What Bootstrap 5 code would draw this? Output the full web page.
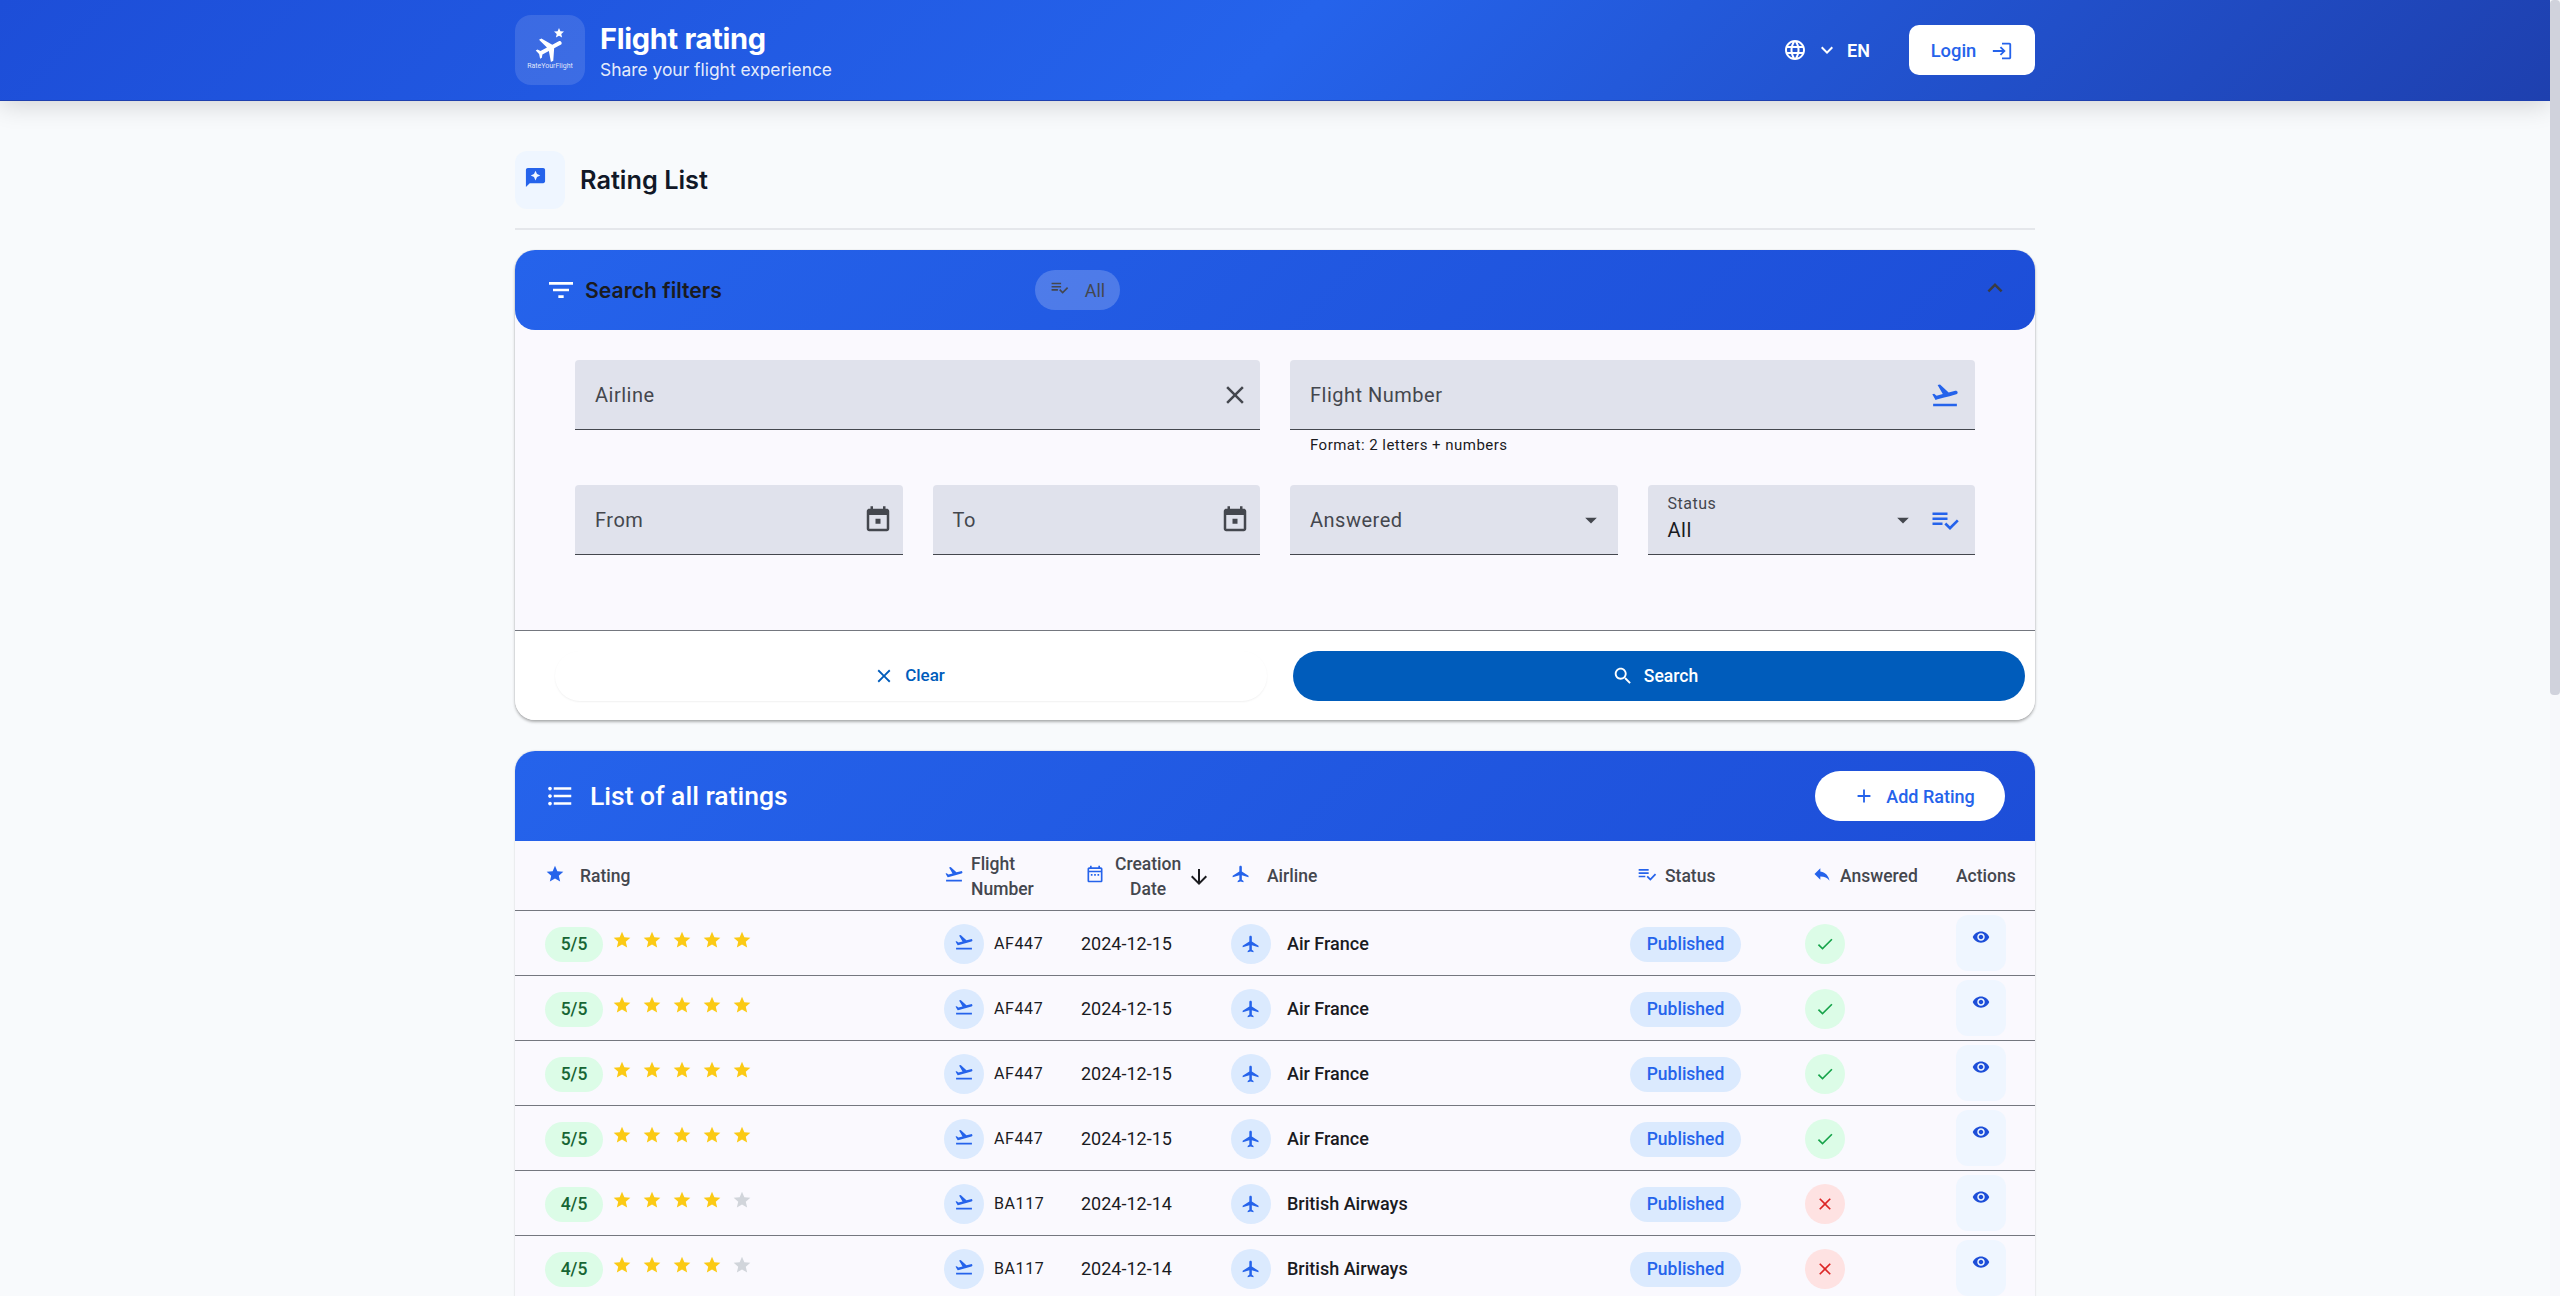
<!DOCTYPE html>
<html lang="en">
<head>
<meta charset="utf-8">
<title>Flight rating</title>
<link href="https://cdn.jsdelivr.net/npm/bootstrap@5.3.0/dist/css/bootstrap.min.css" rel="stylesheet">
<style>
html,body{height:100%;overflow:hidden}
body{font-family:Roboto,"Liberation Sans",sans-serif;background:#f8fafc;color:#1a1b1f}
.scroller{height:100vh;overflow:hidden;flex:1 1 auto;min-width:0}
.sbar{width:10px;flex:none;background:#f7f8fb}
.sbar-thumb{height:695px;background:#d0d2dc;border-radius:4px}
.ic{fill:currentColor;flex:none;display:block}
.topbar{height:101px;background:linear-gradient(135deg,#1d4ed8 0%,#2563eb 50%,#1e40af 100%);box-shadow:0 4px 24px rgba(0,0,0,.16);position:relative;border-bottom:1px solid #1e40af}
.wrap{width:1520px;margin-left:515px}
.topbar .wrap{height:100px}
.brand-gap{gap:15px}
.logo-box{width:70px;height:70px;border-radius:16px;background:rgba(255,255,255,.12);color:#fff;position:relative}
.logo-plane{left:19px;top:18px;transform:rotate(62deg)}
.logo-star{left:38px;top:12px}
.logo-txt{font-size:7px;line-height:8px;color:rgba(255,255,255,.85);position:absolute;left:0;right:0;top:47px;text-align:center}
.brand-t{font-family:Inter,sans-serif;font-weight:700;font-size:29px;line-height:38px;color:#fff;letter-spacing:-.3px;padding-top:1px}
.brand-s{font-family:Inter,sans-serif;font-size:17.4px;line-height:24px;color:rgba(255,255,255,.9)}
.lang{color:#fff;font-weight:600;font-size:18px}
.login-b{width:126px;height:50px;background:#fff;color:#2563eb;border-radius:10px;font-weight:500;font-size:18.4px;gap:15px;margin-left:39px;padding-top:1px}
.title-row{height:129px;padding-top:50px;border-bottom:2px solid #e5e7eb;gap:15px}
.title-ico{width:50px;height:58px;background:#eff6ff;border-radius:12px;color:#2563eb;padding:15px 0 0 9px}
.title-t{font-family:Inter,sans-serif;font-size:25.3px;font-weight:600;color:#111827;margin:0;height:58px;line-height:58px}
.panel{margin-top:20px;border-radius:20px;background:#faf9fe;box-shadow:0 2px 3px rgba(0,0,0,.3),0 0 1px rgba(0,0,0,.25)}
.panel-head{height:80px;border-radius:20px;padding:0 30px;background:linear-gradient(135deg,#2563eb,#1d4ed8);color:#fff}
.panel-t{font-family:Inter,sans-serif;font-size:21.2px;font-weight:600;color:#1a1b1f;padding-top:1px}
.chip-all{position:absolute;left:520px;top:20px;width:85px;height:40px;border-radius:20px;background:rgba(255,255,255,.2);color:#44474e;font-size:18px;gap:16px}
.chip-ic{position:relative;top:-3px}
.chev{color:#3a3c42;margin-right:-5px;position:relative;top:-2px}
.panel-body-x{padding:30px 60px 0;height:300px}
.gutter-30{--bs-gutter-x:30px}
.fld{height:70px;background:#e0e2ec;border-radius:4px 4px 0 0;border-bottom:1.5px solid #44474e;padding:0 10px 0 20px;color:#44474e;font-size:20px;letter-spacing:.5px}
.fld-flight,.fld-status{padding-right:15px}
.fld-ans{padding-right:13px}
.fld-label{font-size:16px;line-height:22px;letter-spacing:.5px}
.fld-val{font-size:20px;line-height:30px;color:#1a1b1f;padding-bottom:2px}
.st-gap{gap:13px}
.hint{font-size:15px;line-height:20px;padding:5px 20px 0;letter-spacing:.48px;color:#1a1b1f;height:55px}
.tri{color:#44474e}
.blue{color:#2563eb}
.actions-x{border-top:1.5px solid #74777f;background:#fff;height:90px;padding:20px 10px 0 40px;border-radius:0 0 20px 20px;gap:26px}
.pill-clear,.pill-search{height:50px;border-radius:25px;font-weight:500;gap:10px}
.pill-clear{width:712px;background:#fff;color:#005cbb;box-shadow:0 1px 2px rgba(0,0,0,.06);font-size:17px;padding-right:16px}
.pill-search{width:732px;background:#005cbb;color:#fff;font-size:17.5px;padding-right:20px}
.list-card{margin-top:31px;border-radius:20px 20px 0 0;background:#faf9fe;box-shadow:0 0 2px rgba(0,0,0,.2)}
.list-head{height:90px;border-radius:20px 20px 0 0;padding:0 30px;background:linear-gradient(135deg,#2563eb,#1d4ed8);color:#fff}
.list-t{font-size:26.5px;font-weight:500;margin:0 0 0 7px;color:#fff}
.add-b{width:190px;height:50px;background:#fff;color:#2563eb;border-radius:25px;font-size:18px;font-weight:500;gap:11px;padding-left:20px}
.tbl{table-layout:fixed;width:1520px;margin:0;--bs-table-bg:#faf9fe;--bs-table-border-color:#74777f}
.tbl th,.tbl td{padding:0 0 0 16px;vertical-align:middle;border-bottom:1.5px solid #74777f}
.tbl th{height:69px;font-size:17.5px;font-weight:500;line-height:25px;color:#44474e;padding-top:3px}
.tbl td{height:65px;font-size:18px;color:#1a1b1f;padding-top:2px}
.tbl th:first-child,.tbl td:first-child{padding-left:30px}
.th-ic{color:#2563eb;position:relative;top:-3px}
.th-gap{gap:15px}
.th-fl{gap:7px}
.th-pad{margin-left:7px}
.date-head{padding:0 16px 0 10px}
.sort-ic{color:#1a1b1f;margin-left:-10px}
.sc{background:#dcfce7;color:#166534;height:35px;width:58px;border-radius:18px;font-weight:500;font-size:17.5px;margin-top:1px}
.stars{position:relative;top:-4px;margin-left:1px;gap:10px}
.star-on{color:#fbca15}
.star-off{color:#d1d5db}
.circ{width:40px;height:40px;border-radius:50%;flex:none}
.c-blue{background:#dbeafe;color:#2563eb}
.c-ok{background:#dcfce7;color:#16a34a}
.c-no{background:#fee2e2;color:#dc2626}
.fl-gap{gap:10px}
.code{font-size:16px;letter-spacing:.6px}
.air{font-weight:500}
.pub{width:111px;height:35px;border-radius:18px;background:#dbeafe;color:#2563eb;font-weight:500;font-size:17.5px;margin-top:1px}
.eye-b{width:50px;height:56px;border-radius:12px;background:#eff6ff;color:#1d4ed8;padding-top:13px;margin-top:-2px}
</style>
</head>
<body class="d-flex">
<svg width="0" height="0" class="position-absolute">
<defs>
<symbol id="i-land" viewBox="0 0 24 24"><path d="M2.5 19h19v2h-19v-2zm19.57-9.36c-.21-.8-1.04-1.28-1.84-1.06L14.92 10l-6.9-6.43-1.93.51 4.14 7.17-4.97 1.33-1.97-1.54-1.45.39 1.82 3.16.77 1.33 1.6-.43 5.31-1.42 4.35-1.16L21 11.49c.81-.23 1.28-1.05 1.07-1.85z"/></symbol>
<symbol id="i-plane" viewBox="0 0 24 24"><path d="M21 16v-2l-8-5V3.5c0-.83-.67-1.5-1.5-1.5S10 2.67 10 3.5V9l-8 5v2l8-2.5V19l-2 1.5V22l3.5-1 3.5 1v-1.5L13 19v-5.5l8 2.5z"/></symbol>
<symbol id="i-star" viewBox="0 0 24 24"><path d="M12 17.27L18.18 21l-1.64-7.03L22 9.24l-7.19-.61L12 2 9.19 8.63 2 9.24l5.46 4.73L5.82 21z"/></symbol>
<symbol id="i-eye" viewBox="0 0 24 24"><path d="M12 4.5C7 4.5 2.73 7.61 1 12c1.73 4.39 6 7.5 11 7.5s9.27-3.11 11-7.5c-1.73-4.39-6-7.5-11-7.5zM12 17c-2.76 0-5-2.24-5-5s2.24-5 5-5 5 2.24 5 5-2.24 5-5 5zm0-8c-1.66 0-3 1.34-3 3s1.34 3 3 3 3-1.34 3-3-1.34-3-3-3z"/></symbol>
<symbol id="i-check" viewBox="0 0 24 24"><path d="M9 16.17L4.83 12l-1.42 1.41L9 19 21 7l-1.41-1.41z"/></symbol>
<symbol id="i-close" viewBox="0 0 24 24"><path d="M19 6.41L17.59 5 12 10.59 6.41 5 5 6.41 10.59 12 5 17.59 6.41 19 12 13.41 17.59 19 19 17.59 13.41 12z"/></symbol>
<symbol id="i-event" viewBox="0 0 24 24"><path d="M14 11h-4v4h4v-4zM16 1v2H8V1H6v2H5c-1.11 0-1.99.9-1.99 2L3 19c0 1.1.89 2 2 2h14c1.1 0 2-.9 2-2V5c0-1.1-.9-2-2-2h-1V1h-2zm3 18H5V8h14v11z"/></symbol>
<symbol id="i-cal" viewBox="0 0 24 24"><path d="M19 4h-1V2h-2v2H8V2H6v2H5c-1.1 0-2 .9-2 2v14c0 1.1.9 2 2 2h14c1.1 0 2-.9 2-2V6c0-1.1-.9-2-2-2zm0 16H5V10h14v10zm0-12H5V6h14v2zM7 12h2v2H7zm4 0h2v2h-2zm4 0h2v2h-2z"/></symbol>
<symbol id="i-filter" viewBox="0 0 24 24"><path d="M10 18h4v-2h-4v2zM3 6v2h18V6H3zm3 7h12v-2H6v2z"/></symbol>
<symbol id="i-up" viewBox="0 0 24 24"><path d="M12 8l-6 6 1.41 1.41L12 10.83l4.59 4.58L18 14z"/></symbol>
<symbol id="i-down" viewBox="0 0 24 24"><path d="M16.59 8.59L12 13.17 7.41 8.59 6 10l6 6 6-6z"/></symbol>
<symbol id="i-globe" viewBox="0 0 24 24"><path d="M11.99 2C6.47 2 2 6.48 2 12s4.47 10 9.99 10C17.52 22 22 17.52 22 12S17.52 2 11.99 2zm6.93 6h-2.95c-.32-1.25-.78-2.45-1.38-3.56 1.84.63 3.37 1.91 4.33 3.56zM12 4.04c.83 1.2 1.48 2.53 1.91 3.96h-3.82c.43-1.43 1.08-2.76 1.91-3.96zM4.26 14C4.1 13.36 4 12.69 4 12s.1-1.36.26-2h3.38c-.08.66-.14 1.32-.14 2 0 .68.06 1.34.14 2H4.26zm.82 2h2.95c.32 1.25.78 2.45 1.38 3.56-1.84-.63-3.37-1.9-4.33-3.56zm2.95-8H5.08c.96-1.66 2.49-2.93 4.33-3.56C8.81 5.55 8.35 6.75 8.03 8zM12 19.96c-.83-1.2-1.48-2.53-1.91-3.96h3.82c-.43 1.43-1.08 2.76-1.91 3.96zM14.34 14H9.66c-.09-.66-.16-1.32-.16-2 0-.68.07-1.35.16-2h4.68c.09.65.16 1.32.16 2 0 .68-.07 1.34-.16 2zm.25 5.56c.6-1.11 1.06-2.31 1.38-3.56h2.95c-.96 1.65-2.49 2.93-4.33 3.56zM16.36 14c.08-.66.14-1.32.14-2 0-.68-.06-1.34-.14-2h3.38c.16.64.26 1.31.26 2s-.1 1.36-.26 2h-3.38z"/></symbol>
<symbol id="i-login" viewBox="0 0 24 24"><path d="M11 7L9.6 8.4l2.6 2.6H2v2h10.2l-2.6 2.6L11 17l5-5-5-5zm9 12h-8v2h8c1.1 0 2-.9 2-2V5c0-1.1-.9-2-2-2h-8v2h8v14z"/></symbol>
<symbol id="i-add" viewBox="0 0 24 24"><path d="M19 13h-6v6h-2v-6H5v-2h6V5h2v6h6v2z"/></symbol>
<symbol id="i-search" viewBox="0 0 24 24"><path d="M15.5 14h-.79l-.28-.27C15.41 12.59 16 11.11 16 9.5 16 5.91 13.09 3 9.5 3S3 5.91 3 9.5 5.91 16 9.5 16c1.61 0 3.09-.59 4.23-1.57l.27.28v.79l5 4.99L20.49 19l-4.99-5zm-6 0C7.01 14 5 11.99 5 9.5S7.01 5 9.5 5 14 7.01 14 9.5 11.99 14 9.5 14z"/></symbol>
<symbol id="i-list" viewBox="0 0 24 24"><path d="M4 10.5c-.83 0-1.5.67-1.5 1.5s.67 1.5 1.5 1.5 1.5-.67 1.5-1.5-.67-1.5-1.5-1.5zm0-6c-.83 0-1.5.67-1.5 1.5S3.17 7.5 4 7.5 5.5 6.83 5.5 6 4.83 4.5 4 4.5zm0 12c-.83 0-1.5.68-1.5 1.5s.68 1.5 1.5 1.5 1.5-.68 1.5-1.5-.67-1.5-1.5-1.5zM7 19h14v-2H7v2zm0-6h14v-2H7v2zm0-8v2h14V5H7z"/></symbol>
<symbol id="i-check-list" viewBox="0 0 24 24"><path d="M14 10H2v2h12v-2zm0-4H2v2h12V6zM2 16h8v-2H2v2zm19.5-4.5L23 13l-6.99 7-4.51-4.5L13 14l3.01 3 5.49-5.5z"/></symbol>
<symbol id="i-reply" viewBox="0 0 24 24"><path d="M10 9V5l-7 7 7 7v-4.1c5 0 8.5 1.6 11 5.1-1-5-4-10-11-11z"/></symbol>
<symbol id="i-arrow" viewBox="0 0 24 24"><path d="M20 12l-1.41-1.41L13 16.17V4h-2v12.17l-5.58-5.59L4 12l8 8 8-8z"/></symbol>
<symbol id="i-review" viewBox="0 0 24 24"><path d="M20 2H4c-1.1 0-2 .9-2 2v18l4-4h14c1.1 0 2-.9 2-2V4c0-1.1-.9-2-2-2zm-6.43 9.57L12 15l-1.57-3.43L7 10l3.43-1.57L12 5l1.57 3.43L17 10l-3.43 1.57z"/></symbol>
<symbol id="i-drop" viewBox="0 0 24 24"><path d="M7 10l5 5 5-5z"/></symbol>
</defs>
</svg>
<div class="scroller">
<header class="topbar">
  <div class="wrap d-flex align-items-center justify-content-between">
    <div class="d-flex align-items-center brand-gap">
      <div class="logo-box d-flex justify-content-center">
        <svg class="ic position-absolute logo-plane" width="32" height="32"><use href="#i-plane"/></svg>
        <svg class="ic position-absolute logo-star" width="12" height="12"><use href="#i-star"/></svg>
        <span class="logo-txt">RateYourFlight</span>
      </div>
      <div>
        <div class="brand-t">Flight rating</div>
        <div class="brand-s">Share your flight experience</div>
      </div>
    </div>
    <div class="d-flex align-items-center">
      <div class="lang d-flex align-items-center">
        <svg class="ic" width="24" height="24"><use href="#i-globe"/></svg>
        <svg class="ic ms-2" width="24" height="24"><use href="#i-down"/></svg>
        <span class="ms-2">EN</span>
      </div>
      <div class="login-b d-flex align-items-center justify-content-center">Login <svg class="ic" width="22" height="22"><use href="#i-login"/></svg></div>
    </div>
  </div>
</header>
<main class="wrap">
  <div class="title-row d-flex">
    <div class="title-ico"><svg class="ic" width="23" height="23"><use href="#i-review"/></svg></div>
    <h1 class="title-t">Rating List</h1>
  </div>
  <section class="panel">
    <div class="panel-head d-flex align-items-center justify-content-between position-relative">
      <div class="d-flex align-items-center gap-2">
        <svg class="ic text-white" width="32" height="32"><use href="#i-filter"/></svg>
        <span class="panel-t">Search filters</span>
      </div>
      <div class="chip-all d-flex align-items-center justify-content-center">
        <svg class="ic chip-ic" width="19" height="19"><use href="#i-check-list"/></svg><span>All</span>
      </div>
      <svg class="ic chev" width="30" height="30"><use href="#i-up"/></svg>
    </div>
    <div class="panel-body-x">
      <div class="row gutter-30">
        <div class="col-6">
          <div class="fld d-flex align-items-center justify-content-between">Airline <svg class="ic" width="30" height="30"><use href="#i-close"/></svg></div>
        </div>
        <div class="col-6">
          <div class="fld fld-flight d-flex align-items-center justify-content-between">Flight Number <svg class="ic blue" width="30" height="30"><use href="#i-land"/></svg></div>
          <div class="hint">Format: 2 letters + numbers</div>
        </div>
      </div>
      <div class="row gutter-30">
        <div class="col-3"><div class="fld d-flex align-items-center justify-content-between">From <svg class="ic" width="30" height="30"><use href="#i-event"/></svg></div></div>
        <div class="col-3"><div class="fld d-flex align-items-center justify-content-between">To <svg class="ic" width="30" height="30"><use href="#i-event"/></svg></div></div>
        <div class="col-3"><div class="fld fld-ans d-flex align-items-center justify-content-between">Answered <svg class="ic tri" width="28" height="28"><use href="#i-drop"/></svg></div></div>
        <div class="col-3"><div class="fld fld-status d-flex align-items-center justify-content-between">
          <div><div class="fld-label">Status</div><div class="fld-val">All</div></div>
          <div class="d-flex align-items-center st-gap"><svg class="ic tri" width="28" height="28"><use href="#i-drop"/></svg><svg class="ic blue" width="30" height="30"><use href="#i-check-list"/></svg></div>
        </div></div>
      </div>
    </div>
    <div class="actions-x d-flex">
      <button class="pill-clear btn border-0 d-flex align-items-center justify-content-center"><svg class="ic" width="22" height="22"><use href="#i-close"/></svg>Clear</button>
      <button class="pill-search btn border-0 d-flex align-items-center justify-content-center"><svg class="ic" width="22" height="22"><use href="#i-search"/></svg>Search</button>
    </div>
  </section>
  <section class="list-card">
    <div class="list-head d-flex align-items-center justify-content-between">
      <div class="d-flex align-items-center gap-2">
        <svg class="ic" width="30" height="30"><use href="#i-list"/></svg>
        <h2 class="list-t">List of all ratings</h2>
      </div>
      <button class="add-b btn border-0 d-flex align-items-center justify-content-center"><svg class="ic" width="22" height="22"><use href="#i-add"/></svg>Add Rating</button>
    </div>
    <table class="table tbl">
      <colgroup><col style="width:413px"><col style="width:137px"><col style="width:150px"><col style="width:399px"><col style="width:175px"><col style="width:151px"><col style="width:95px"></colgroup>
      <thead>
        <tr>
          <th><div class="d-flex align-items-center th-gap"><svg class="ic th-ic" width="20" height="20"><use href="#i-star"/></svg><span>Rating</span></div></th>
          <th><div class="d-flex align-items-center th-fl"><svg class="ic th-ic" width="20" height="20"><use href="#i-land"/></svg><span>Flight<br>Number</span></div></th>
          <th><div class="d-flex align-items-center"><svg class="ic th-ic ms-1" width="20" height="20"><use href="#i-cal"/></svg><span class="text-center date-head">Creation<br>Date</span><svg class="ic sort-ic" width="24" height="24"><use href="#i-arrow"/></svg></div></th>
          <th><div class="d-flex align-items-center gap-3"><svg class="ic th-ic" width="20" height="20"><use href="#i-plane"/></svg><span>Airline</span></div></th>
          <th><div class="d-flex align-items-center gap-2"><svg class="ic th-ic th-pad" width="20" height="20"><use href="#i-check-list"/></svg><span>Status</span></div></th>
          <th><div class="d-flex align-items-center gap-2"><svg class="ic th-ic th-pad" width="20" height="20"><use href="#i-reply"/></svg><span>Answered</span></div></th>
          <th>Actions</th>
        </tr>
      </thead>
      <tbody id="rows"></tbody>
    </table>
  </section>
</main>
</div>
<div class="sbar"><div class="sbar-thumb"></div></div>
<script src="https://cdn.jsdelivr.net/npm/bootstrap@5.3.0/dist/js/bootstrap.bundle.min.js"></script>
<script>
const data=[[5,'AF447','2024-12-15','Air France',1],[5,'AF447','2024-12-15','Air France',1],[5,'AF447','2024-12-15','Air France',1],[5,'AF447','2024-12-15','Air France',1],[4,'BA117','2024-12-14','British Airways',0],[4,'BA117','2024-12-14','British Airways',0]];
const ic=(id,s,c='')=>`<svg class="ic ${c}" width="${s}" height="${s}"><use href="#${id}"/></svg>`;
document.getElementById('rows').innerHTML=data.map(r=>{
 let st='';for(let i=0;i<5;i++)st+=ic('i-star',20,i<r[0]?'star-on':'star-off');
 return `<tr>
 <td><div class="d-flex align-items-center gap-2"><span class="sc d-flex align-items-center justify-content-center">${r[0]}/5</span><span class="stars d-flex">${st}</span></div></td>
 <td><div class="d-flex align-items-center fl-gap"><span class="circ c-blue d-flex align-items-center justify-content-center pb-1">${ic('i-land',20)}</span><span class="code">${r[1]}</span></div></td>
 <td>${r[2]}</td>
 <td><div class="d-flex align-items-center gap-3"><span class="circ c-blue d-flex align-items-center justify-content-center">${ic('i-plane',20)}</span><span class="air">${r[3]}</span></div></td>
 <td><span class="pub d-flex align-items-center justify-content-center">Published</span></td>
 <td><span class="circ ${r[4]?'c-ok':'c-no'} d-flex align-items-center justify-content-center">${ic(r[4]?'i-check':'i-close',20)}</span></td>
 <td><div class="eye-b d-flex justify-content-center">${ic('i-eye',18)}</div></td>
 </tr>`}).join('');
</script>
</body>
</html>
